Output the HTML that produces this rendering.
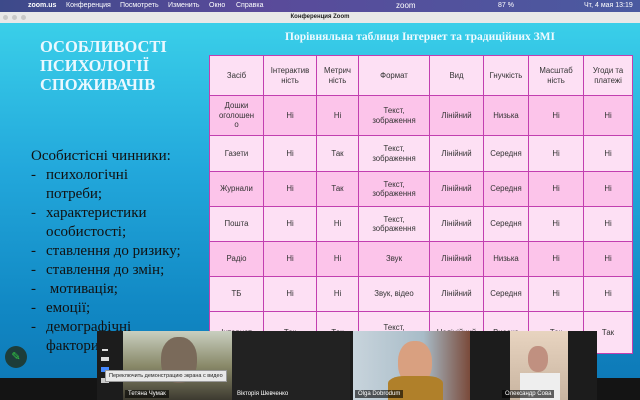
<!DOCTYPE html>
<html><head><meta charset="utf-8"><style>
*{margin:0;padding:0;box-sizing:border-box}
body{width:640px;height:400px;overflow:hidden;position:relative;font-family:"Liberation Sans",sans-serif;background:#111}
.menubar{position:absolute;left:0;top:0;width:640px;height:12px;background:linear-gradient(90deg,#3d4a8a,#5a4a9a 40%,#4a5aa0);color:#fff;font-size:7px;line-height:12px}
.menubar span{position:absolute;top:0}
.titlebar{position:absolute;left:0;top:12px;width:640px;height:11px;background:#e8e8e8;font-size:6px;line-height:11px;text-align:center;color:#222;font-weight:bold}
.dot{position:absolute;top:3px;width:5px;height:5px;border-radius:50%;background:#c8c8c8}
.slide{position:absolute;left:0;top:23px;width:640px;height:355px;background:linear-gradient(180deg,#3acfe9 0%,#23a9dc 40%,#1188c4 80%,#0e7ab8 100%)}
.h1{position:absolute;left:40px;top:14px;color:#eaf8ff;font-family:"Liberation Serif",serif;font-weight:bold;font-size:16.5px;line-height:19px}
.tt{position:absolute;left:210px;top:8px;width:420px;text-align:center;color:#eefaff;font-family:"Liberation Serif",serif;font-weight:bold;font-size:11.5px}
.body{position:absolute;left:31px;top:124px;color:#111;font-family:"Liberation Serif",serif;font-size:15px;line-height:19px}
.body div{position:relative;padding-left:15px}
.body div.d::before{content:"-";position:absolute;left:0}
table{position:absolute;left:209px;top:32px;border-collapse:collapse;font-size:7.8px;color:#333}
td{border:1px solid #c23fb0;text-align:center;vertical-align:middle;line-height:9.5px}
tr.a td{background:#fde0f4}
tr.b td{background:#fcc4ea}
.strip{position:absolute;left:97px;top:331px;width:500px;height:69px;background:#1c1c1c}
.bottom{position:absolute;left:0;top:378px;width:640px;height:22px;background:#141414}
.tile{position:absolute;top:331px;height:69px}
.name{position:absolute;bottom:2px;left:2px;background:rgba(0,0,0,.6);color:#fff;font-size:6px;padding:1px 3px}
</style></head><body>
<div class="menubar">
<span style="left:12px;font-size:8px"></span><span style="left:28px;font-weight:bold">zoom.us</span><span style="left:66px">Конференция</span><span style="left:120px">Посмотреть</span><span style="left:168px">Изменить</span><span style="left:209px">Окно</span><span style="left:236px">Справка</span>
<span style="left:396px;font-size:8px">zoom</span><span style="left:498px">87 %</span><span style="left:584px">Чт, 4 мая 13:19</span>
</div>
<div class="titlebar"><div class="dot" style="left:3px"></div><div class="dot" style="left:12px"></div><div class="dot" style="left:21px"></div>Конференция Zoom</div>
<div class="slide">
<div class="h1">ОСОБЛИВОСТІ<br>ПСИХОЛОГІЇ<br>СПОЖИВАЧІВ</div>
<div class="tt">Порівняльна таблиця Інтернет та традиційних ЗМІ</div>
<div class="body">
<div style="padding-left:0">Особистісні чинники:</div>
<div class="d">психологічні<br>потреби;</div>
<div class="d">характеристики<br>особистості;</div>
<div class="d">ставлення до ризику;</div>
<div class="d">ставлення до змін;</div>
<div class="d">&nbsp;мотивація;</div>
<div class="d">емоції;</div>
<div class="d">демографічні<br>фактори</div>
</div>
<table>
<tr class="a" style="height:40px"><td style="width:54px">Засіб</td><td style="width:53px">Інтерактив<br>ність</td><td style="width:42px">Метрич<br>ність</td><td style="width:71px">Формат</td><td style="width:54px">Вид</td><td style="width:45px">Гнучкість</td><td style="width:55px">Масштаб<br>ність</td><td style="width:49px">Угоди та<br>платежі</td></tr>
<tr class="b" style="height:40px"><td>Дошки<br>оголошен<br>о</td><td>Ні</td><td>Ні</td><td>Текст,<br>зображення</td><td>Лінійний</td><td>Низька</td><td>Ні</td><td>Ні</td></tr>
<tr class="a" style="height:36px"><td>Газети</td><td>Ні</td><td>Так</td><td>Текст,<br>зображення</td><td>Лінійний</td><td>Середня</td><td>Ні</td><td>Ні</td></tr>
<tr class="b" style="height:35px"><td>Журнали</td><td>Ні</td><td>Так</td><td>Текст,<br>зображення</td><td>Лінійний</td><td>Середня</td><td>Ні</td><td>Ні</td></tr>
<tr class="a" style="height:35px"><td>Пошта</td><td>Ні</td><td>Ні</td><td>Текст,<br>зображення</td><td>Лінійний</td><td>Середня</td><td>Ні</td><td>Ні</td></tr>
<tr class="b" style="height:35px"><td>Радіо</td><td>Ні</td><td>Ні</td><td>Звук</td><td>Лінійний</td><td>Низька</td><td>Ні</td><td>Ні</td></tr>
<tr class="a" style="height:35px"><td>ТБ</td><td>Ні</td><td>Ні</td><td>Звук, відео</td><td>Лінійний</td><td>Середня</td><td>Ні</td><td>Ні</td></tr>
<tr class="a" style="height:42px"><td>Інтернет</td><td>Так</td><td>Так</td><td>Текст,<br>Зображення,</td><td>Нелінійний</td><td>Висока</td><td>Так</td><td>Так</td></tr>
</table>
</div>
<div style="position:absolute;left:5px;top:346px;width:22px;height:22px;border-radius:50%;background:#1d3d3a;color:#3c4;font-size:11px;text-align:center;line-height:22px">✎</div>
<div class="bottom"></div>
<div class="strip"></div>
<div style="position:absolute;left:101px;top:345px;width:8px;height:50px">
<div style="height:2px;background:#ddd;margin:4px 1px 6px"></div><div style="height:4px;background:#ddd;margin-bottom:6px"></div><div style="height:5px;background:#48f;margin-bottom:6px"></div><div style="height:5px;background:#ccc"></div></div>
<div class="tile" style="left:123px;width:109px;background:linear-gradient(180deg,#c9cfc0,#8a8a6a 50%,#3d3a30)">
<div style="position:absolute;left:38px;top:6px;width:36px;height:46px;border-radius:45%;background:#7a6a5a"></div>
<div class="name">Тетяна Чумак</div></div>
<div style="position:absolute;left:105px;top:370px;background:#e8e8e8;color:#222;font-size:5.5px;padding:2px 3px;border:1px solid #999">Переключить демонстрацию экрана с видео</div>
<div class="tile" style="left:232px;width:118px;background:#222"><div class="name" style="background:none">Вікторія Шевченко</div></div>
<div class="tile" style="left:353px;width:117px;background:linear-gradient(90deg,#c8d4dc,#a8bcc8 60%,#7a4a3a)">
<div style="position:absolute;left:45px;top:10px;width:34px;height:44px;border-radius:45%;background:#d9a080"></div>
<div style="position:absolute;left:35px;top:45px;width:55px;height:24px;background:#b0802a;border-radius:30% 30% 0 0"></div>
<div class="name">Olga Dobrodum</div></div>
<div class="tile" style="left:510px;width:58px;background:linear-gradient(180deg,#e8d4c0,#c8b4a0)">
<div style="position:absolute;left:18px;top:15px;width:20px;height:26px;border-radius:45%;background:#c09080"></div>
<div style="position:absolute;left:10px;top:42px;width:40px;height:27px;background:#eee"></div>
<div class="name" style="left:-8px">Олександр Сова</div></div>
</body></html>
